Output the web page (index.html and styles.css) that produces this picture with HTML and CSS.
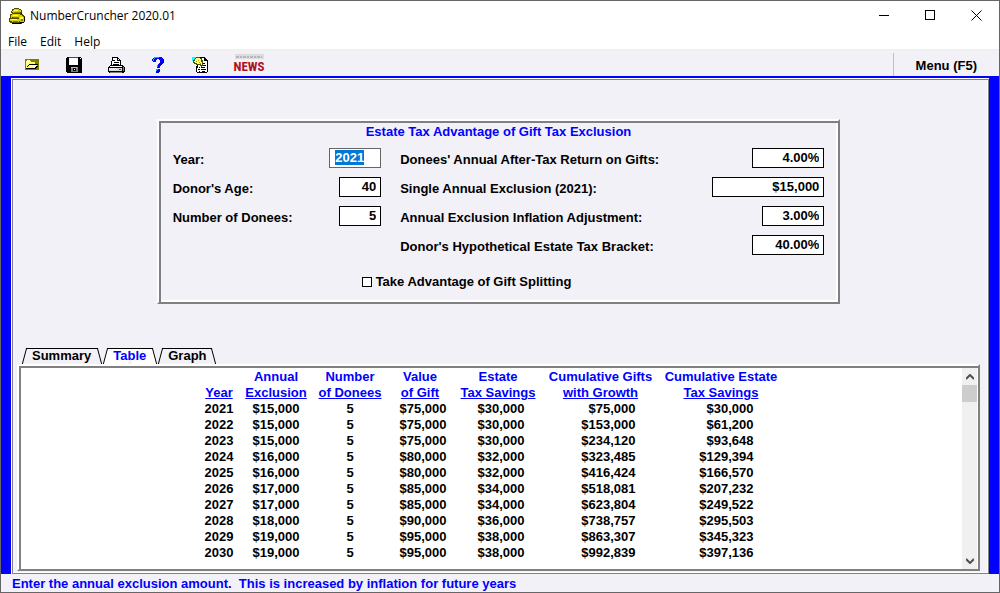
FILE: index.html
```
<!DOCTYPE html>
<html lang="en">
<head>
  <meta charset="UTF-8">
  <title>NumberCruncher 2020.01</title>
  <link rel="stylesheet" href="styles.css">
</head>
<body>
  <div class="window">
    <header class="titlebar">
      <svg class="app-icon" width="17" height="16" viewBox="0 0 17 16" shape-rendering="crispEdges">
        <path fill="#504c00" d="M5 0h5v1h2v1h1v3h-1v1h2v1h1v1h1v6h-1v1h-2v1H3v-1H1v-1H0v-4h1V6h2V5H2V3h1V1h2z"/>
        <path fill="#d8d000" d="M5 1h5v1h2v2h-1v1H4V4H3V3h1V2h1zM3 6h8v1h2v2H3v1H2V7h1zM1 11h9v3H3v-1H1z"/>
        <path fill="#d8d000" d="M10 8h4v1h1v5h-4v-1h-1z"/>
        <path fill="#ffff50" d="M5 2h4v1H5zM4 7h5v1H4zM2 11h6v1H2zM11 9h3v2h-3z"/>
        <path fill="#808000" d="M5 4h6v1H5zM4 9h6v1H4zM4 13h5v1H4zM12 11h2v2h-2z"/>
        <path fill="#000" d="M12 5h1v1h-1zM11 14h4v1h-4zM3 15h9v1H3zM15 9h1v4h-1z"/>
      </svg>
      <span class="app-name">NumberCruncher 2020.01</span>
      <div class="window-buttons">
        <button aria-label="Minimize"><svg width="11" height="11" shape-rendering="crispEdges"><path d="M0 5.5h10" stroke="#000"/></svg></button>
        <button aria-label="Maximize"><svg width="11" height="11" shape-rendering="crispEdges"><path d="M.5.5h9v9h-9z" fill="none" stroke="#000"/></svg></button>
        <button aria-label="Close"><svg width="11" height="11"><path d="M.5.5l10 10M10.5.5l-10 10" stroke="#000"/></svg></button>
      </div>
    </header>

    <nav class="menubar">
      <button>File</button>
      <button>Edit</button>
      <button>Help</button>
    </nav>

    <div class="toolbar">
      <button aria-label="Open">
        <svg width="14" height="11" shape-rendering="crispEdges">
          <path fill="#808000" d="M0 0h14v11H0z"/>
          <path fill="#ffff80" d="M1 2h1V1h3v1h1v1h4v2H4v1H3v1H2v2H1z"/>
          <path fill="#000" d="M4 5h9v1h-1v1h1v1h-1v1h-1v1H1V9h1V7h1V6h1z"/>
          <path fill="#ffff80" d="M4 6h8v1h-1v1h-1v1H2V8h1V7h1z"/>
          <path fill="#fff" d="M2 2h2v1H2zM5 6h2v1H5zM4 8h2v1H4zM8 7h2v1H8z"/>
        </svg>
      </button>
      <button aria-label="Save">
        <svg width="16" height="16" shape-rendering="crispEdges">
          <path fill="#000" d="M1 0h14v1h1v15H1v-1H0V1h1z"/>
          <path fill="#f00" d="M3 0h9v1H3z"/>
          <path fill="#fff" d="M3 1h9v7H3zM14 1h1v1h-1z"/>
          <path fill="#808080" d="M5 10h7v5H5z"/>
          <path fill="#c0c0c0" d="M5 10h6v1H5z"/>
          <path fill="#000" d="M7 11h3v3H7z"/>
          <path fill="#fff" d="M8 12h1v1H8z"/>
        </svg>
      </button>
      <button aria-label="Print">
        <svg width="17" height="16" shape-rendering="crispEdges">
          <path fill="#000" d="M4 0h6v1h1v1h1v1h1v5h2v1h1v1h1v5h-1v1H1v-1H0v-5h1V9h1V8h1V4h1z"/>
          <path fill="#fff" d="M5 1h4v3h3v4H4V4h1zM2 9h12v1H2z"/>
          <path fill="#000" d="M5 3h2v1H5zM6 5h5v1H6zM5 7h6v1H5z"/>
          <path fill="#fff" d="M10 2h1v1h-1z"/>
          <path fill="#d8d8d8" d="M1 11h13v3H1z"/>
          <path fill="#808080" d="M15 10h1v4h-1zM2 15h12v1H2z"/>
          <path fill="#fff" d="M1 11h1v1H1zM3 11h1v1H3zM5 11h1v1H5zM7 11h1v1H7zM2 12h1v1H2zM4 12h1v1H4zM6 12h1v1H6zM8 12h1v1H8z"/>
          <path fill="#f00" d="M11 12h2v1h-2z"/>
        </svg>
      </button>
      <button aria-label="Help topics">
        <svg width="12" height="16" shape-rendering="crispEdges">
          <path fill="#00f" d="M2 0h8v1h1v1h1v4h-1v1h-1v1H9v1H8v2H5V8h1V7h1V6h1V3H7V2H5v1H4v2H1V4H0V2h1V1h1zM4 12h4v3H7v1H4z"/>
          <path fill="#00a8ff" d="M2 0h5v1H3v1H2v2H1V2h1zM5 8h1v2H5zM4 12h2v1H5v1H4z"/>
          <path fill="#0000a0" d="M11 3h1v3h-1v1h-1v1H9V7h1V6h1zM7 13h1v2H5v1h2v-1h1z"/>
        </svg>
      </button>
      <button aria-label="Notes">
        <svg width="17" height="16" shape-rendering="crispEdges">
          <path fill="#000" d="M5 0h8v1h1v1h1v1h1v12h-1v1H5v-1H4V9h1z"/>
          <path fill="#fff" d="M6 1h6v3h3v11H5v-4h1z"/>
          <path fill="#000" d="M10 6h3v1h-3zM7 10h1v1H7zM9 10h4v1H9zM11 8h3v1h-3zM6 12h2v1H6zM9 12h5v1H9zM7 14h1v1H7zM10 14h3v1h-3z"/>
          <path fill="#504c00" d="M3 0h5v1h2v2h1v6h-1v1H9V9H8V8H4V7H2V6H1V3h1V1h1z"/>
          <path fill="#ffff70" d="M4 1h4v1h1v3h1v3H9V7H5V6H3V5H2V4h1V2h1z"/>
          <path fill="#a8a000" d="M6 3h1v1H6zM7 5h1v1H7zM4 4h1v1H4zM8 6h1v1H8z"/>
          <path fill="#0ff" d="M0 0h4v1H3v1H2v1H1v1H0z"/>
        </svg>
      </button>
      <button class="news">
        <svg width="29" height="5" shape-rendering="crispEdges">
          <path fill="#dcdcdc" d="M0 0h29v5H0z"/>
          <path d="M1 3h26" stroke="#b8b8b8" stroke-width="2" stroke-dasharray="3 1 2 1"/>
        </svg>
        <span>NEWS</span>
      </button>
      <button class="main-menu">Menu (F5)</button>
    </div>

    <main class="workspace">
      <div class="page">
        <form class="panel">
          <h1>Estate Tax Advantage of Gift Tax Exclusion</h1>
          <div class="fields">
            <div class="field-group donor">
              <div class="field"><label for="year">Year:</label><input id="year" class="w-year" value="2021"></div>
              <div class="field"><label for="age">Donor's Age:</label><input id="age" class="w-short" value="40"></div>
              <div class="field"><label for="donees">Number of Donees:</label><input id="donees" class="w-short" value="5"></div>
            </div>
            <div class="field-group rates">
              <div class="field"><label for="return">Donees' Annual After-Tax Return on Gifts:</label><input id="return" class="w-rate" value="4.00%"></div>
              <div class="field"><label for="exclusion">Single Annual Exclusion (2021):</label><input id="exclusion" class="w-amount" value="$15,000"></div>
              <div class="field"><label for="inflation">Annual Exclusion Inflation Adjustment:</label><input id="inflation" class="w-percent" value="3.00%"></div>
              <div class="field"><label for="bracket">Donor's Hypothetical Estate Tax Bracket:</label><input id="bracket" class="w-rate" value="40.00%"></div>
            </div>
          </div>
          <label class="splitting"><input type="checkbox"> Take Advantage of Gift Splitting</label>
        </form>

        <div class="tabs" role="tablist">
          <button role="tab">Summary</button>
          <button role="tab" class="active" aria-selected="true">Table</button>
          <button role="tab">Graph</button>
        </div>

        <section class="results">
          <div class="results-body">
            <table>
              <colgroup>
                <col class="c-year"><col class="c-excl"><col class="c-donees"><col class="c-gift">
                <col class="c-savings"><col class="c-growth"><col class="c-total">
              </colgroup>
              <thead>
                <tr>
                  <th><br><u>Year</u></th>
                  <th>Annual<br><u>Exclusion</u></th>
                  <th>Number<br><u>of Donees</u></th>
                  <th>Value<br><u>of Gift</u></th>
                  <th>Estate<br><u>Tax Savings</u></th>
                  <th>Cumulative Gifts<br><u>with Growth</u></th>
                  <th>Cumulative Estate<br><u>Tax Savings</u></th>
                </tr>
              </thead>
              <tbody>
                <tr><td>2021</td><td>$15,000</td><td>5</td><td>$75,000</td><td>$30,000</td><td>$75,000</td><td>$30,000</td></tr>
                <tr><td>2022</td><td>$15,000</td><td>5</td><td>$75,000</td><td>$30,000</td><td>$153,000</td><td>$61,200</td></tr>
                <tr><td>2023</td><td>$15,000</td><td>5</td><td>$75,000</td><td>$30,000</td><td>$234,120</td><td>$93,648</td></tr>
                <tr><td>2024</td><td>$16,000</td><td>5</td><td>$80,000</td><td>$32,000</td><td>$323,485</td><td>$129,394</td></tr>
                <tr><td>2025</td><td>$16,000</td><td>5</td><td>$80,000</td><td>$32,000</td><td>$416,424</td><td>$166,570</td></tr>
                <tr><td>2026</td><td>$17,000</td><td>5</td><td>$85,000</td><td>$34,000</td><td>$518,081</td><td>$207,232</td></tr>
                <tr><td>2027</td><td>$17,000</td><td>5</td><td>$85,000</td><td>$34,000</td><td>$623,804</td><td>$249,522</td></tr>
                <tr><td>2028</td><td>$18,000</td><td>5</td><td>$90,000</td><td>$36,000</td><td>$738,757</td><td>$295,503</td></tr>
                <tr><td>2029</td><td>$19,000</td><td>5</td><td>$95,000</td><td>$38,000</td><td>$863,307</td><td>$345,323</td></tr>
                <tr><td>2030</td><td>$19,000</td><td>5</td><td>$95,000</td><td>$38,000</td><td>$992,839</td><td>$397,136</td></tr>
              </tbody>
            </table>
          </div>
          <div class="scrollbar">
            <button aria-label="Scroll up"><svg width="8" height="6"><path d="M0 5l4-4 4 4" fill="none" stroke="#505050" stroke-width="2"/></svg></button>
            <div class="thumb"></div>
            <button aria-label="Scroll down"><svg width="8" height="6"><path d="M0 1l4 4 4-4" fill="none" stroke="#505050" stroke-width="2"/></svg></button>
          </div>
        </section>
      </div>
    </main>

    <footer class="status">Enter the annual exclusion amount.&nbsp; This is increased by inflation for future years</footer>
  </div>

  <script>
    const year = document.getElementById('year');
    year.focus();
    year.select();
  </script>
</body>
</html>
```
FILE: styles.css
```
* {
  box-sizing: border-box;
}
body {
  margin: 0;
  font: bold 13px/16px "Liberation Sans", Arial, sans-serif;
  color: #000;
}
button {
  margin: 0;
  padding: 0;
  border: none;
  background: none;
  font: inherit;
  color: inherit;
}
svg {
  display: block;
}
.window {
  display: flex;
  flex-direction: column;
  min-height: 100vh;
  border: 1px solid #666;
  background: #f2f1f7;
}

/* title bar and menus */
.titlebar {
  display: flex;
  align-items: center;
  height: 29px;
  padding-left: 8px;
  gap: 4px;
  background: #fff;
  font: 12px/16px "Segoe UI", "Open Sans", sans-serif;
}
.window-buttons {
  display: flex;
  margin-left: auto;
}
.window-buttons button {
  display: flex;
  align-items: center;
  justify-content: center;
  width: 46px;
  height: 29px;
}
.menubar {
  display: flex;
  gap: 13px;
  height: 19px;
  padding-left: 7px;
  background: #fff;
  font: 12px/20px "Segoe UI", "Open Sans", sans-serif;
}
.menubar button {
  padding-top: 2px;
}
.toolbar {
  display: flex;
  height: 27px;
  padding-left: 10px;
  border-top: 2px solid #f0f0f0;
}
.toolbar button {
  display: flex;
  align-items: center;
  justify-content: center;
  width: 42px;
  padding-top: 2px;
}
.toolbar .news {
  flex-direction: column;
  width: 56px;
  color: #b0101c;
  font: bold 13px/16px "Liberation Sans Narrow", "Roboto Condensed", "Open Sans Condensed", "Liberation Sans", sans-serif;
}
.toolbar .main-menu {
  width: auto;
  margin: 2px 0 0 auto;
  padding: 2px 22px 0;
  border-left: 1px solid #c0c0c0;
}

/* work area */
.workspace {
  display: flex;
  flex: 1;
  padding: 2px 10px 0;
  background: #00f;
}
.page {
  display: flex;
  flex-direction: column;
  flex: 1;
  padding: 41px 9px 3px 6px;
  background: #f2f1f7;
  box-shadow: inset 1px 1px #fff, inset -1px -1px #808080, inset 2px 2px #808080, inset -2px -2px #fff;
}
.panel,
.results {
  border: 2px solid;
  border-color: #fff #808080 #808080 #fff;
  box-shadow: inset 2px 2px #808080, inset -2px -2px #fff;
}
.panel {
  width: 71%;
  margin: 0 auto 44px;
  padding: 2px 14px 12px;
}
.panel h1 {
  margin: 0 0 8px;
  font-size: 13px;
  line-height: 17px;
  text-align: center;
  color: #00f;
}
.fields {
  display: flex;
  gap: 19px;
}
.field-group {
  display: flex;
  flex-direction: column;
  gap: 9px;
}
.donor {
  width: 32%;
}
.rates {
  flex: 1;
}
.field {
  display: flex;
  justify-content: space-between;
  align-items: center;
  height: 20px;
}
.field label {
  padding-top: 3px;
}
.field input {
  height: 20px;
  padding: 0 4px 2px;
  border: 1px solid #000;
  border-radius: 0;
  outline: none;
  background: #fff;
  font: inherit;
  text-align: right;
}
.field .w-year {
  width: 52px;
  padding-left: 5px;
  border-color: #666;
  text-align: left;
}
.w-year::selection {
  background: #0078d7;
  color: #fff;
}
.field .w-short {
  width: 42px;
}
.field .w-percent {
  width: 62px;
}
.field .w-rate {
  width: 72px;
}
.field .w-amount {
  width: 112px;
}
.splitting {
  display: flex;
  align-items: center;
  gap: 4px;
  margin: 19px 0 0 29%;
}
.splitting input {
  appearance: none;
  width: 10px;
  height: 10px;
  margin: 0;
  border: 1px solid #000;
  background: #fff;
}

/* tabs */
.tabs {
  display: flex;
  gap: 2px;
  padding-left: 5px;
}
.tabs button {
  position: relative;
  z-index: 0;
  height: 16px;
  padding: 0 10px;
}
.tabs button::before,
.tabs button::after {
  content: "";
  position: absolute;
  z-index: -1;
  top: 0;
  bottom: 0;
  border-top: 1px solid #000;
}
.tabs button::before {
  left: 2px;
  right: 50%;
  border-left: 1px solid #000;
  transform: skewX(-15deg);
}
.tabs button::after {
  left: 50%;
  right: 2px;
  border-right: 1px solid #000;
  transform: skewX(15deg);
}
.tabs .active {
  color: #00f;
}
.tabs .active::before,
.tabs .active::after {
  background: #fff;
}

/* results */
.results {
  display: flex;
  flex: 1;
  padding: 2px 0 0 2px;
  background: #fff;
}
.results-body {
  flex: 1;
  padding-top: 1px;
}
table {
  width: 586px;
  margin: 0 auto;
  border-collapse: collapse;
  table-layout: fixed;
}
th,
td {
  padding: 0;
  text-align: center;
  white-space: nowrap;
}
th {
  color: #00f;
  vertical-align: bottom;
}
td:nth-child(n+4) {
  text-align: right;
}
td:nth-child(4) {
  padding-right: 6px;
}
td:nth-child(5) {
  padding-right: 19px;
}
td:nth-child(6) {
  padding-right: 22px;
}
td:nth-child(7) {
  padding-right: 31px;
}
.c-year {
  width: 41px;
}
.c-excl {
  width: 73px;
}
.c-donees {
  width: 75px;
}
.c-gift {
  width: 65px;
}
.c-savings {
  width: 91px;
}
.c-growth {
  width: 114px;
}
.scrollbar {
  display: flex;
  flex-direction: column;
  width: 15px;
  margin-right: 1px;
  background: #f0f0f0;
}
.scrollbar button {
  display: flex;
  align-items: center;
  justify-content: center;
  height: 17px;
}
.scrollbar button:last-child {
  margin-top: auto;
}
.thumb {
  height: 17px;
  background: #cdcdcd;
}
.status {
  height: 18px;
  padding: 2px 11px 0;
  color: #00f;
}
```
